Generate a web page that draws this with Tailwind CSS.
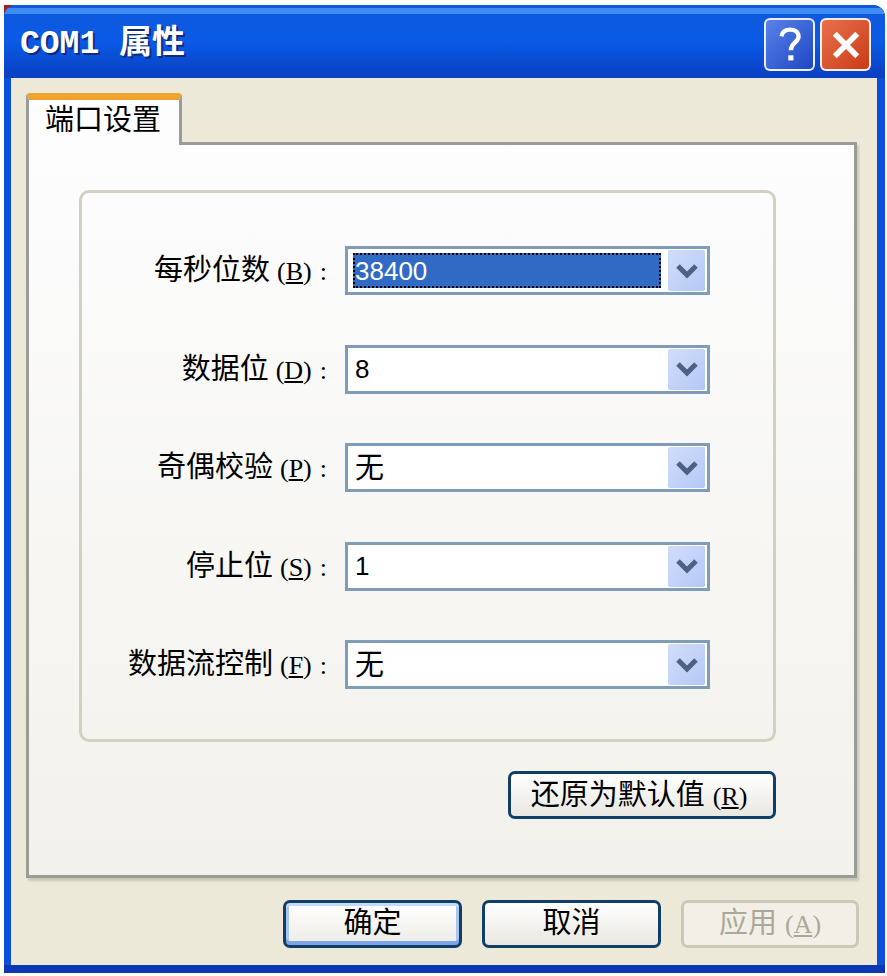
<!DOCTYPE html>
<html lang="zh-CN">
<head>
    <meta charset="UTF-8">
    <title>COM1 属性</title>
    <script src="https://cdn.jsdelivr.net/npm/@tailwindcss/browser@4"></script>
</head>
<body class="bg-white w-[887px] h-[976px] overflow-hidden pt-[5px] pl-[4px] font-['Liberation_Serif','Noto_Sans_CJK_SC',serif] text-black">
    <!-- red sliver of the desktop behind the window's top left corner -->
    <div class="absolute left-[4px] top-[5px] size-[10px] bg-[#a3201c]"></div>

    <div class="relative w-[881px] h-[968px] flex flex-col rounded-t-[12px] overflow-hidden bg-[#0a4fdc] border-b-[8px] border-b-[#0a37b4]">
        <!-- title bar -->
        <div class="h-[73px] shrink-0 flex items-center pl-[16px] pr-[14px] bg-gradient-to-b from-[#0f58dc] via-[#0a5ae6] to-[#0a3fc0] relative">
            <div class="absolute inset-x-0 top-[3px] h-[6px] bg-[#3d8df2]"></div>
            <span class="relative mt-[5px] text-white font-bold text-[33px] leading-none font-['Liberation_Mono','Noto_Sans_CJK_SC',monospace] [text-shadow:2px_2px_0_#0c2a80]">COM1&nbsp;属性</span>
            <div class="ml-auto relative flex gap-[5px] mt-[6px]">
                <div class="w-[51px] h-[53px] rounded-[6px] border-2 border-white/90 bg-gradient-to-br from-[#5a82e8] to-[#1f45c4] flex items-center justify-center">
                    <svg width="24" height="36" viewBox="0 0 26 42" fill="none">
                        <path d="M3 11C4 5 8 3 13 3C19 3 23 6 23 11C23 18 14 18 14 27" stroke="#fff" stroke-width="5"/>
                        <rect x="11" y="33" width="6" height="6" fill="#fff"/>
                    </svg>
                </div>
                <div class="w-[51px] h-[53px] rounded-[6px] border-2 border-white/90 bg-gradient-to-br from-[#ea6f4c] to-[#c93a10] flex items-center justify-center">
                    <svg width="30" height="30" viewBox="0 0 32 32" fill="none">
                        <path d="M4 4L28 28M28 4L4 28" stroke="#fff" stroke-width="6"/>
                    </svg>
                </div>
            </div>
        </div>

        <!-- client area -->
        <div class="flex-1 ml-[7px] mr-[8px] bg-[#ece9d8] pt-[15px] pl-[15px] pr-[20px]">
            <div class="relative z-10 w-[156px] h-[52px] -mb-[3px] pl-[16px] pb-[5px] flex items-center bg-[#fdfdfe] border-x-[3px] border-x-[#9a9d96] rounded-t-[4px] border-t-[7px] border-t-[#eda32e] text-[29px] leading-none">端口设置</div>

            <div class="h-[736px] border-[3px] border-[#9a9d96] shadow-[2px_3px_2px_#c9c7b6] bg-gradient-to-b from-[#fdfdfe] to-[#f2f1eb] pt-[45px] pl-[50px] pr-[78px]">
                <div class="h-[552px] border-[3px] border-[#d2d1c1] rounded-[10px] pt-[53px] pr-[63px] flex flex-col gap-[49.5px]">
                    <div class="flex items-center justify-end gap-[18px]">
                        <label class="text-[29px] leading-none whitespace-nowrap flex items-baseline">每秒位数<span class="ml-[7px] text-[26px]">(<u>B</u>)</span><span class="ml-[8px] text-[26px]">:</span></label>
                        <div class="w-[365px] h-[49px] shrink-0 border-[3px] border-[#7f9db9] bg-white flex items-center pl-[5px] pr-[2px] gap-[7px]">
                            <div class="w-[308px] h-[35px] shrink-0 bg-[#316ac5] border-2 border-dotted border-black flex items-center text-white font-['Liberation_Sans'] text-[26px] leading-none">38400</div>
                            <div class="w-[37px] h-[41px] rounded-[2px] bg-gradient-to-br from-[#d2ddfb] to-[#b4c8f6] flex items-center justify-center">
                                <svg width="24" height="16" viewBox="0 0 24 16" fill="none"><path d="M3 3L12 12L21 3" stroke="#4d6185" stroke-width="5"/></svg>
                            </div>
                        </div>
                    </div>
                    <div class="flex items-center justify-end gap-[18px]">
                        <label class="text-[29px] leading-none whitespace-nowrap flex items-baseline">数据位<span class="ml-[7px] text-[26px]">(<u>D</u>)</span><span class="ml-[8px] text-[26px]">:</span></label>
                        <div class="w-[365px] h-[49px] shrink-0 border-[3px] border-[#7f9db9] bg-white flex items-center pl-[7px] pr-[2px] font-['Liberation_Sans'] text-[26px] leading-none">
                            <span class="flex-1">8</span>
                            <div class="w-[37px] h-[41px] rounded-[2px] bg-gradient-to-br from-[#d2ddfb] to-[#b4c8f6] flex items-center justify-center">
                                <svg width="24" height="16" viewBox="0 0 24 16" fill="none"><path d="M3 3L12 12L21 3" stroke="#4d6185" stroke-width="5"/></svg>
                            </div>
                        </div>
                    </div>
                    <div class="flex items-center justify-end gap-[18px]">
                        <label class="text-[29px] leading-none whitespace-nowrap flex items-baseline">奇偶校验<span class="ml-[7px] text-[26px]">(<u>P</u>)</span><span class="ml-[8px] text-[26px]">:</span></label>
                        <div class="w-[365px] h-[49px] shrink-0 border-[3px] border-[#7f9db9] bg-white flex items-center pl-[7px] pr-[2px] text-[29px] leading-none">
                            <span class="flex-1 pt-[1px]">无</span>
                            <div class="w-[37px] h-[41px] rounded-[2px] bg-gradient-to-br from-[#d2ddfb] to-[#b4c8f6] flex items-center justify-center">
                                <svg width="24" height="16" viewBox="0 0 24 16" fill="none"><path d="M3 3L12 12L21 3" stroke="#4d6185" stroke-width="5"/></svg>
                            </div>
                        </div>
                    </div>
                    <div class="flex items-center justify-end gap-[18px]">
                        <label class="text-[29px] leading-none whitespace-nowrap flex items-baseline">停止位<span class="ml-[7px] text-[26px]">(<u>S</u>)</span><span class="ml-[8px] text-[26px]">:</span></label>
                        <div class="w-[365px] h-[49px] shrink-0 border-[3px] border-[#7f9db9] bg-white flex items-center pl-[7px] pr-[2px] font-['Liberation_Sans'] text-[26px] leading-none">
                            <span class="flex-1">1</span>
                            <div class="w-[37px] h-[41px] rounded-[2px] bg-gradient-to-br from-[#d2ddfb] to-[#b4c8f6] flex items-center justify-center">
                                <svg width="24" height="16" viewBox="0 0 24 16" fill="none"><path d="M3 3L12 12L21 3" stroke="#4d6185" stroke-width="5"/></svg>
                            </div>
                        </div>
                    </div>
                    <div class="flex items-center justify-end gap-[18px]">
                        <label class="text-[29px] leading-none whitespace-nowrap flex items-baseline">数据流控制<span class="ml-[7px] text-[26px]">(<u>F</u>)</span><span class="ml-[8px] text-[26px]">:</span></label>
                        <div class="w-[365px] h-[49px] shrink-0 border-[3px] border-[#7f9db9] bg-white flex items-center pl-[7px] pr-[2px] text-[29px] leading-none">
                            <span class="flex-1 pt-[1px]">无</span>
                            <div class="w-[37px] h-[41px] rounded-[2px] bg-gradient-to-br from-[#d2ddfb] to-[#b4c8f6] flex items-center justify-center">
                                <svg width="24" height="16" viewBox="0 0 24 16" fill="none"><path d="M3 3L12 12L21 3" stroke="#4d6185" stroke-width="5"/></svg>
                            </div>
                        </div>
                    </div>
                </div>
                <div class="flex justify-end mt-[29px]">
                    <button class="w-[268px] h-[48px] rounded-[7px] border-[3px] border-[#0f3e66] bg-gradient-to-b from-white to-[#e8e7e0] text-[29px] leading-none whitespace-nowrap pr-[6px]">还原为默认值<span class="ml-[8px] text-[26px]">(<u>R</u>)</span></button>
                </div>
            </div>

            <div class="flex justify-end gap-[20px] mt-[22px] -mr-[2px]">
                <button class="w-[179px] h-[48px] rounded-[7px] border-[3px] border-[#0f3e66] bg-gradient-to-b from-white to-[#ecebe4] shadow-[inset_0_3px_0_#c4dcf6,inset_0_-4px_0_#7fa4e6,inset_3px_0_0_#a8c6f0,inset_-3px_0_0_#a8c6f0] text-[29px] leading-none pb-[2px]">确定</button>
                <button class="w-[179px] h-[48px] rounded-[7px] border-[3px] border-[#0f3e66] bg-gradient-to-b from-white to-[#e8e7e0] text-[29px] leading-none pb-[2px]">取消</button>
                <button class="w-[178px] h-[48px] rounded-[7px] border-[3px] border-[#cbc8b8] bg-[#f2f0e6] text-[#aca899] text-[29px] leading-none whitespace-nowrap pb-[2px]">应用<span class="ml-[8px] text-[26px]">(<u>A</u>)</span></button>
            </div>
        </div>
    </div>
</body>
</html>
